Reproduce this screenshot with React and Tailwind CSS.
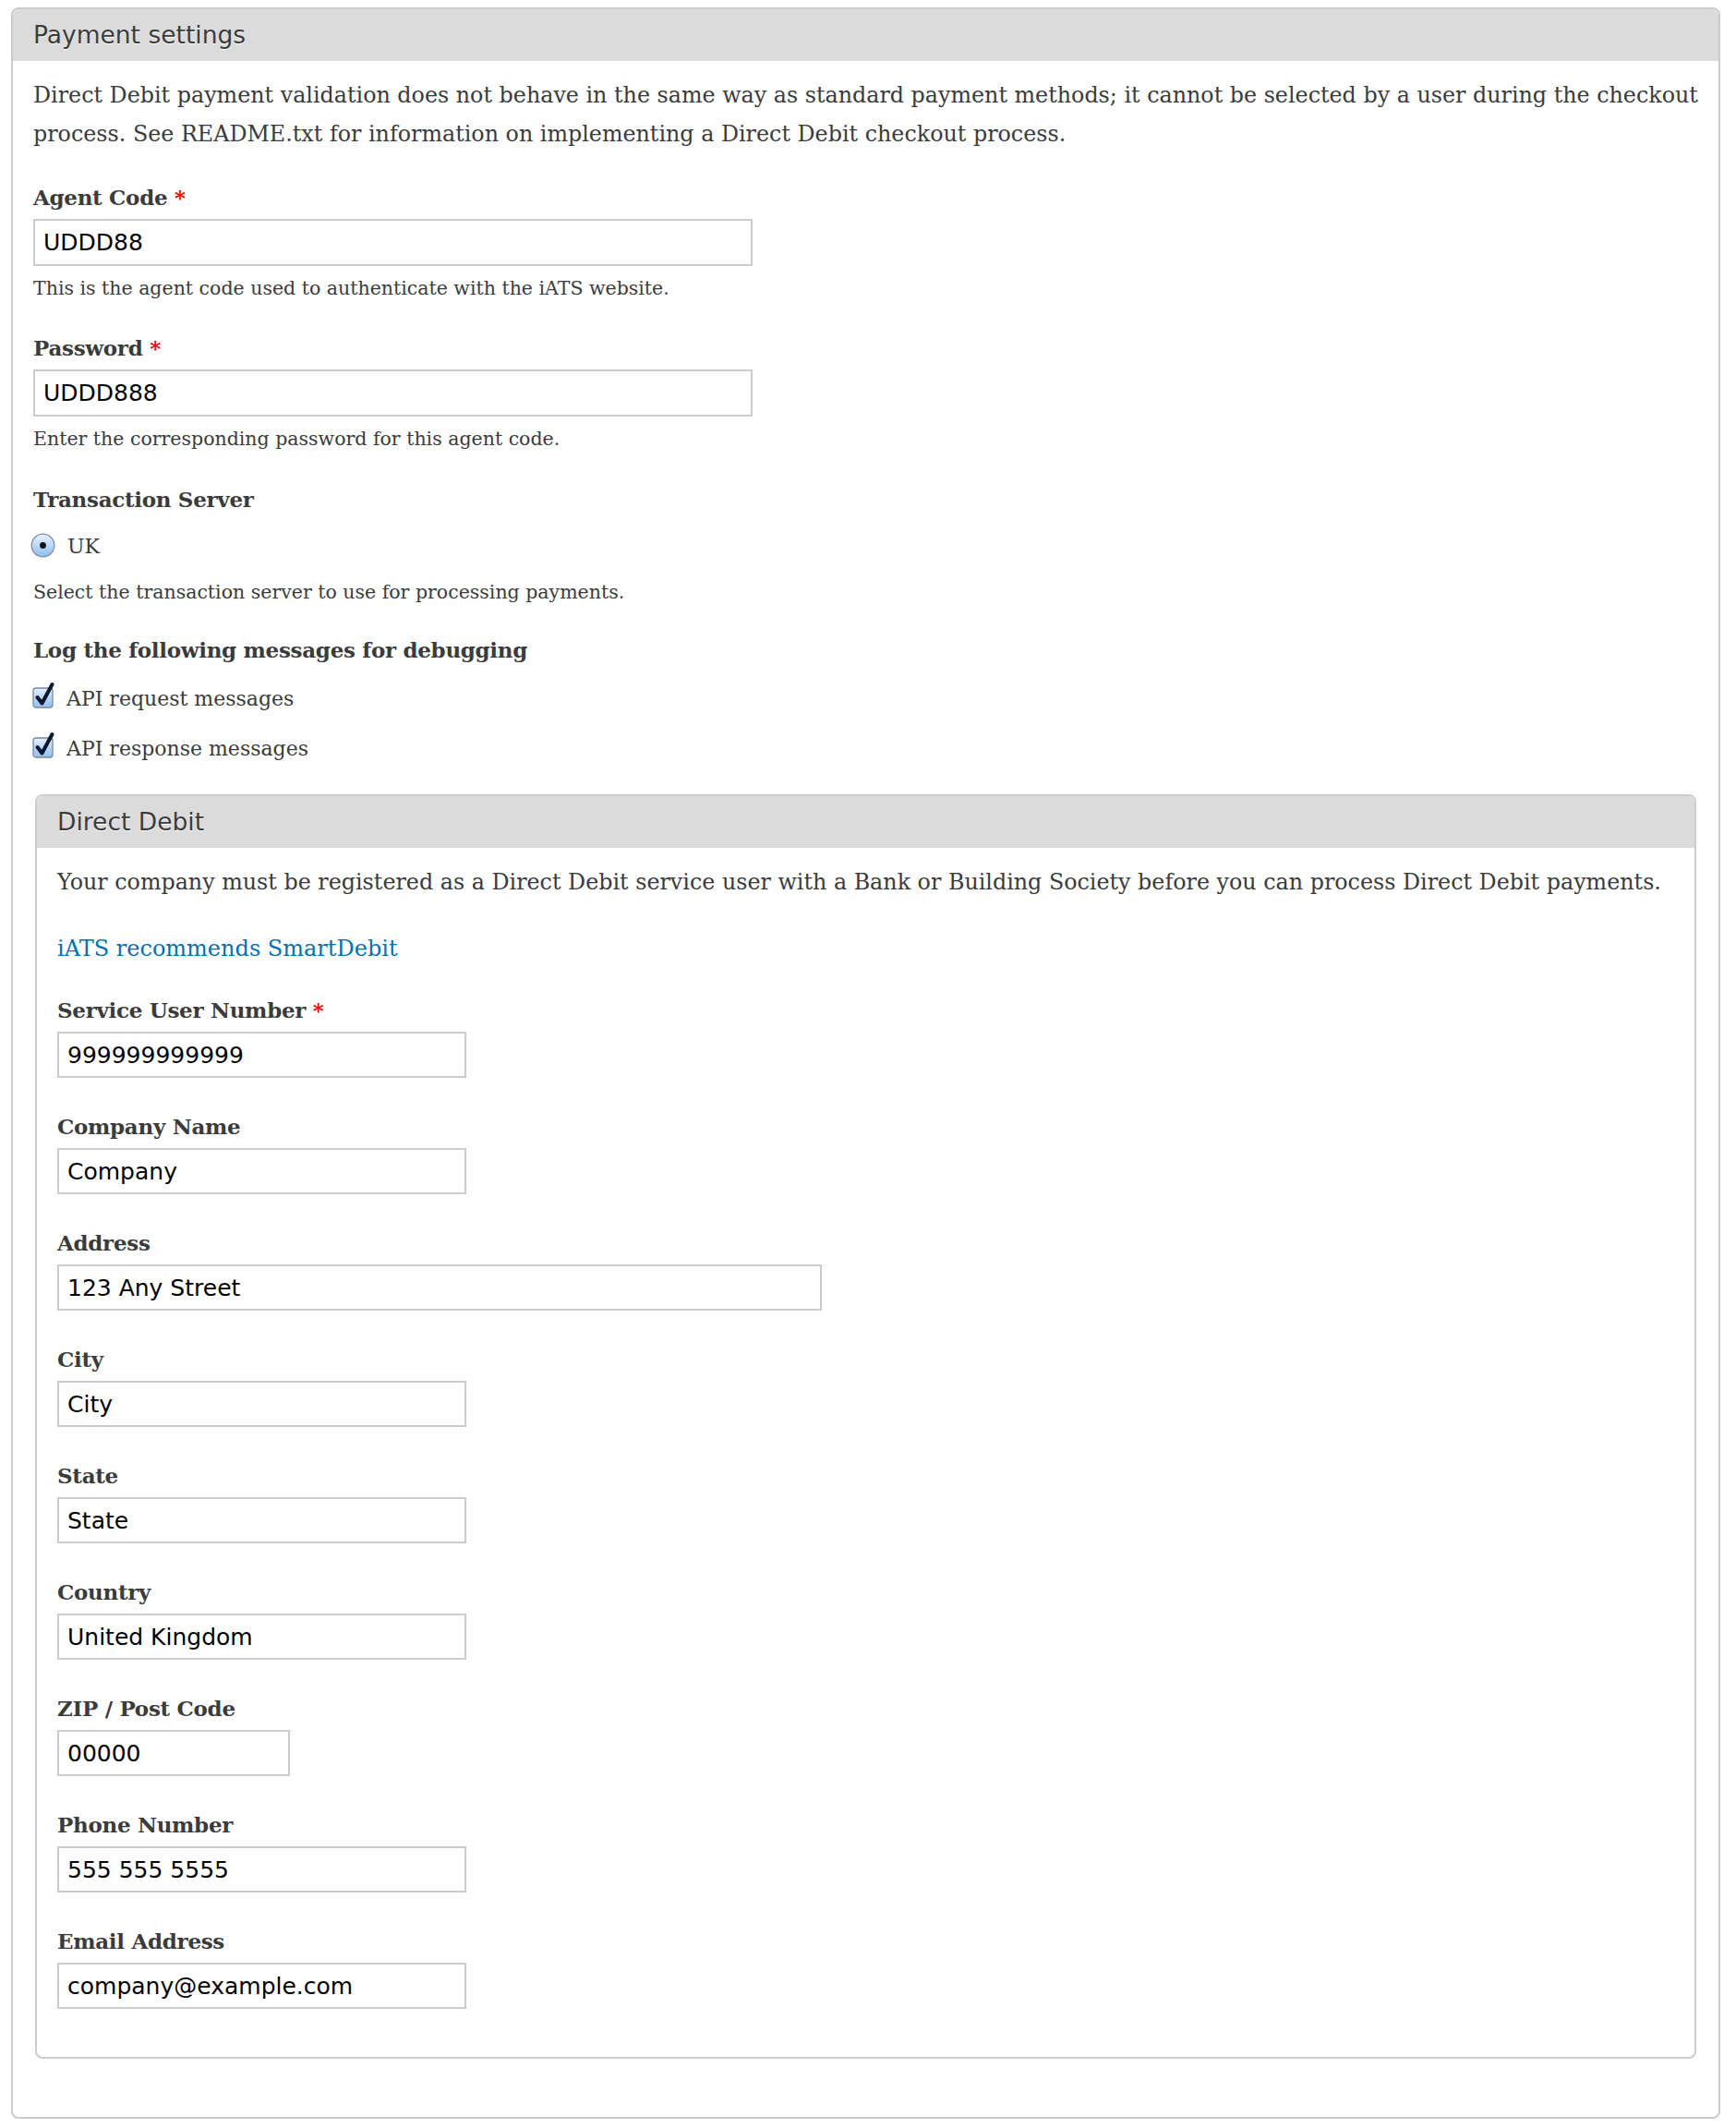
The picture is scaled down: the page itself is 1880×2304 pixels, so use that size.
import React from 'react';

const serif = "font-['DejaVu_Serif',Georgia,serif]";
const sans = "font-['DejaVu_Sans',Verdana,sans-serif]";
const labelCls = `${serif} text-[23px] leading-[32px] font-bold text-[#3b3b3b] tracking-[-0.3px]`;
const helpCls = `${serif} text-[20.5px] leading-[28px] text-[#3b3b3b]`;

const Radio = () => (
    <svg width="27" height="27" viewBox="0 0 27 27" className="shrink-0">
        <defs>
            <linearGradient id="radioFill" x1="0" y1="0" x2="0" y2="1">
                <stop offset="0" stopColor="#eaf4ff" />
                <stop offset="0.5" stopColor="#bcd8f6" />
                <stop offset="1" stopColor="#8fbdee" />
            </linearGradient>
        </defs>
        <circle cx="13.5" cy="13.5" r="12.3" fill="url(#radioFill)" stroke="#7d8fa5" strokeWidth="1.3" />
        <circle cx="13.5" cy="13.5" r="3.4" fill="#0c141c" />
    </svg>
);

const Checkbox = () => (
    <svg width="26" height="30" viewBox="0 0 26 30" className="shrink-0">
        <defs>
            <linearGradient id="checkFill" x1="0" y1="0" x2="0" y2="1">
                <stop offset="0" stopColor="#e6f1fd" />
                <stop offset="0.5" stopColor="#b8d6f5" />
                <stop offset="1" stopColor="#93c0ee" />
            </linearGradient>
        </defs>
        <rect x="1" y="7" width="21" height="21" rx="3" fill="url(#checkFill)" stroke="#7589a2" strokeWidth="1.3" />
        <path d="M5.5 17 L10.5 23.5 L21.5 3" fill="none" stroke="#0b1730" strokeWidth="4" strokeLinecap="round" strokeLinejoin="round" />
    </svg>
);

const Required = () => <span className="text-[#f00] font-bold"> *</span>;

const Field = ({ label, required, value, width, help, inner }) => (
    <div>
        <div className={labelCls}>
            {label}
            {required && <Required />}
        </div>
        <input
            type="text"
            readOnly
            value={value}
            className={`${sans} mt-[7px] block border-2 border-[#cccccc] bg-white px-[9px] text-[25px] text-black outline-none ${inner ? 'h-[50px]' : 'h-[51px]'} ${width}`}
        />
        {help && <div className={`${helpCls} mt-[10px]`}>{help}</div>}
    </div>
);

const Legend = ({ children }) => (
    <div className={`${sans} h-[56px] bg-[#dbdbdb] px-[22px] text-[26.5px] leading-[56px] text-[#3b3b3b] rounded-t-[7px] [text-shadow:0_1px_0_#fff]`}>
        {children}
    </div>
);

const directDebitFields = [
    { label: 'Service User Number', required: true, value: '999999999999', width: 'w-[443px]' },
    { label: 'Company Name', value: 'Company', width: 'w-[443px]' },
    { label: 'Address', value: '123 Any Street', width: 'w-[828px]' },
    { label: 'City', value: 'City', width: 'w-[443px]' },
    { label: 'State', value: 'State', width: 'w-[443px]' },
    { label: 'Country', value: 'United Kingdom', width: 'w-[443px]' },
    { label: 'ZIP / Post Code', value: '00000', width: 'w-[252px]' },
    { label: 'Phone Number', value: '555 555 5555', width: 'w-[443px]' },
    { label: 'Email Address', value: 'company@example.com', width: 'w-[443px]' },
];

const App = () => {
    return (
        <div className="min-h-screen bg-white pt-[8px] pb-[11px]">
            <div className="ml-[12px] w-[1851px] rounded-[8px] border-2 border-[#cccccc] bg-white">
                <Legend>Payment settings</Legend>

                <div className="px-[22px] pt-[16px] pb-[63px]">
                    <p className={`${serif} text-[23.8px] leading-[42px] text-[#3b3b3b] whitespace-nowrap`}>
                        Direct Debit payment validation does not behave in the same way as standard payment methods; it cannot be selected by a user during the checkout
                        <br />
                        process. See README.txt for information on implementing a Direct Debit checkout process.
                    </p>

                    <div className="mt-[32px] flex flex-col gap-[35px]">
                        <Field
                            label="Agent Code"
                            required
                            value="UDDD88"
                            width="w-[779px]"
                            help="This is the agent code used to authenticate with the iATS website."
                        />
                        <Field
                            label="Password"
                            required
                            value="UDDD888"
                            width="w-[779px]"
                            help="Enter the corresponding password for this agent code."
                        />
                    </div>

                    <div className="mt-[36px]">
                        <div className={labelCls}>Transaction Server</div>
                        <div className={`${serif} mt-[19px] flex items-center gap-[13px] text-[22px] leading-[32px] text-[#3b3b3b]`}>
                            <span className="-ml-[3px] -mt-[4px] flex">
                                <Radio />
                            </span>
                            UK
                        </div>
                        <div className={`${helpCls} mt-[19px]`}>
                            Select the transaction server to use for processing payments.
                        </div>
                    </div>

                    <div className="mt-[33px]">
                        <div className={labelCls}>Log the following messages for debugging</div>
                        <div className={`${serif} mt-[21px] flex items-center gap-[11px] text-[22px] leading-[32px] text-[#3b3b3b]`}>
                            <span className="-ml-[1px] -mt-[8px] flex">
                                <Checkbox />
                            </span>
                            API request messages
                        </div>
                        <div className={`${serif} mt-[22px] flex items-center gap-[11px] text-[22px] leading-[32px] text-[#3b3b3b]`}>
                            <span className="-ml-[1px] -mt-[8px] flex">
                                <Checkbox />
                            </span>
                            API response messages
                        </div>
                    </div>

                    <div className="mx-[2px] mt-[33px] rounded-[8px] border-2 border-[#cccccc] bg-white">
                        <Legend>Direct Debit</Legend>
                        <div className="px-[22px] pt-[16px] pb-[52px]">
                            <p className={`${serif} text-[23.8px] leading-[42px] text-[#3b3b3b] whitespace-nowrap`}>
                                Your company must be registered as a Direct Debit service user with a Bank or Building Society before you can process Direct Debit payments.
                            </p>
                            <p className={`${serif} mt-[30px] text-[24px] leading-[42px]`}>
                                <a href="#" className="text-[#0071b3] no-underline">iATS recommends SmartDebit</a>
                            </p>
                            <div className="mt-[30px] flex flex-col gap-[37px]">
                                {directDebitFields.map(f => (
                                    <Field key={f.label} {...f} inner />
                                ))}
                            </div>
                        </div>
                    </div>
                </div>
            </div>
        </div>
    );
};

export default App;
